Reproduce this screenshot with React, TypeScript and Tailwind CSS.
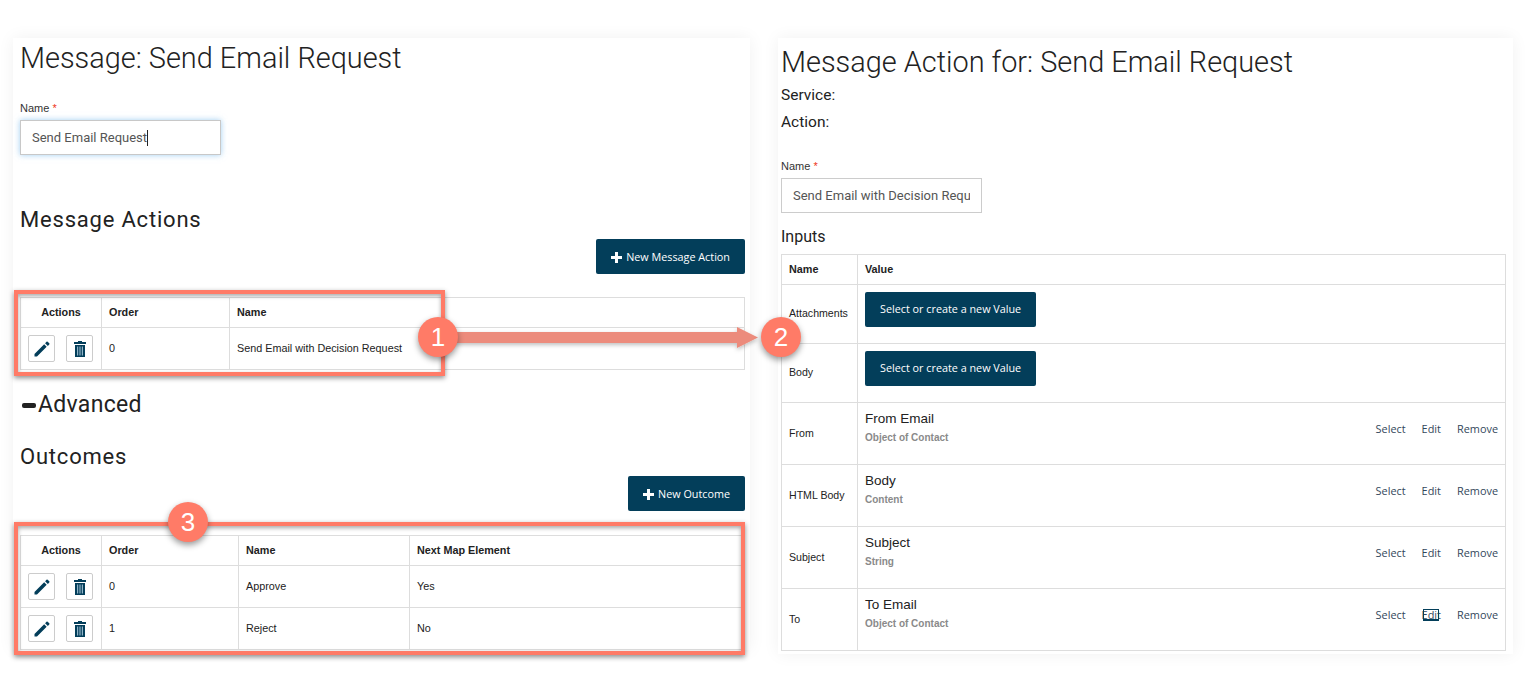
import React from "react";

const Pencil = () => (
  <svg width="20" height="20" viewBox="0 0 24 24" fill="#033e5a">
    <path d="M3 18v3h3L17.6 9.4l-3-3L3 18zM20.71 6.6a1 1 0 0 0 0-1.41l-1.9-1.9a1 1 0 0 0-1.41 0l-1.7 1.7 3.3 3.3 1.71-1.69z" />
  </svg>
);

const Trash = () => (
  <svg width="12" height="16" viewBox="0 0 12 16" fill="#033e5a">
    <path d="M4 0h4v1h4v2H0V1h4V0z" />
    <path d="M1 4h10v12H1V4z" />
    <path d="M3 5.5h1.2v9H3zM5.4 5.5h1.2v9H5.4zM7.8 5.5H9v9H7.8z" fill="#8fb3c7" />
  </svg>
);

const Plus = () => (
  <svg width="11" height="11" viewBox="0 0 11 11" fill="#ffffff">
    <path d="M4 0h3v4h4v3H7v4H4V7H0V4h4z" />
  </svg>
);

const IconButtons = () => (
  <div className="flex gap-[11px]">
    <button className="flex h-[27px] w-[27px] items-center justify-center rounded-[2px] border border-[#cccccc] bg-white">
      <Pencil />
    </button>
    <button className="flex h-[27px] w-[27px] items-center justify-center rounded-[2px] border border-[#cccccc] bg-white">
      <Trash />
    </button>
  </div>
);

const DarkButton = ({ children }: { children: React.ReactNode }) => (
  <button className="flex h-[35px] items-center justify-center gap-[4px] rounded-[2px] bg-[#033e5a] px-[15px] pt-[1px] font-['Open_Sans',sans-serif] text-[10.8px] text-white">
    {children}
  </button>
);

const thBase = "border border-[#dddddd] px-[7px] align-middle text-[10.8px] font-bold text-[#222222]";
const thClass = thBase + " text-left";
const thCenter = thBase + " text-center";
const tdClass = "border border-[#dddddd] px-[7px] align-middle text-[10.8px] text-[#222222]";
const tdName = "border border-[#dddddd] px-[7px] align-middle text-[10.6px] text-[#222222]";

const Heading = ({ children, className }: { children: React.ReactNode; className: string }) => (
  <h2 className={"font-['Roboto',sans-serif] text-[#222222] " + className}>{children}</h2>
);

const NameLabel = ({ className }: { className: string }) => (
  <div className={"h-[14px] font-['Liberation_Sans',sans-serif] text-[11px] leading-[14px] text-[#333333] " + className}>
    Name <span className="text-[#ee3322]">*</span>
  </div>
);

const inputRows = [
  { name: "From", title: "From Email", sub: "Object of Contact" },
  { name: "HTML Body", title: "Body", sub: "Content" },
  { name: "Subject", title: "Subject", sub: "String" },
  { name: "To", title: "To Email", sub: "Object of Contact" },
];

const LeftPanel = () => (
  <section className="h-[612px] w-[737px] bg-white pl-[7px] pr-[5px] shadow-[0_0_16px_rgba(0,0,0,0.06)]">
    <h1 className="h-[40px] font-['Roboto',sans-serif] text-[28.9px] font-light leading-[40px] text-[#222222]">
      Message: Send Email Request
    </h1>
    <NameLabel className="mt-[23px]" />
    <div className="mt-[5px] flex h-[35px] w-[201px] items-center border border-[#c8c8c8] bg-white px-[11px] font-['Roboto',sans-serif] text-[13px] text-[#555555] shadow-[0_0_6px_rgba(102,175,233,0.6)]">
      Send Email Request
      <span className="h-[16px] w-px bg-[#222222]" />
    </div>

    <Heading className="mt-[50px] h-[30px] text-[22px] leading-[30px] tracking-[0.8px]">Message Actions</Heading>
    <div className="mt-[4px] flex justify-end">
      <DarkButton>
        <Plus />
        New Message Action
      </DarkButton>
    </div>

    <table className="mt-[23px] w-[725px] table-fixed border-collapse font-['Liberation_Sans',sans-serif]">
      <thead>
        <tr className="h-[30px]">
          <th className={thCenter + " w-[81px]"}>Actions</th>
          <th className={thClass + " w-[128px]"}>Order</th>
          <th className={thClass}>Name</th>
        </tr>
      </thead>
      <tbody>
        <tr className="h-[42px]">
          <td className={tdClass}>
            <IconButtons />
          </td>
          <td className={tdClass}>0</td>
          <td className={tdClass}>Send Email with Decision Request</td>
        </tr>
      </tbody>
    </table>

    <Heading className="mt-[18px] flex h-[34px] items-center text-[23px] leading-[34px] tracking-[0.3px]">
      <span className="ml-[2px] h-[5px] w-[14px] rounded-[2px] bg-[#222222]" />
      <span className="ml-[2px]">Advanced</span>
    </Heading>
    <Heading className="mt-[20px] h-[30px] text-[22px] leading-[30px] tracking-[0.8px]">Outcomes</Heading>
    <div className="mt-[4px] flex justify-end">
      <DarkButton>
        <Plus />
        New Outcome
      </DarkButton>
    </div>

    <table className="mt-[24px] w-[725px] table-fixed border-collapse font-['Liberation_Sans',sans-serif]">
      <thead>
        <tr className="h-[30px]">
          <th className={thCenter + " w-[81px]"}>Actions</th>
          <th className={thClass + " w-[137px]"}>Order</th>
          <th className={thClass + " w-[171px]"}>Name</th>
          <th className={thClass}>Next Map Element</th>
        </tr>
      </thead>
      <tbody>
        {[
          ["0", "Approve", "Yes"],
          ["1", "Reject", "No"],
        ].map((r) => (
          <tr key={r[0]} className="h-[42px]">
            <td className={tdClass}>
              <IconButtons />
            </td>
            <td className={tdClass}>{r[0]}</td>
            <td className={tdClass}>{r[1]}</td>
            <td className={tdClass}>{r[2]}</td>
          </tr>
        ))}
      </tbody>
    </table>
  </section>
);

const RightPanel = () => (
  <section className="w-[735px] bg-white pb-[3px] pl-[3px] pt-[4px] shadow-[0_0_16px_rgba(0,0,0,0.06)]">
    <h1 className="h-[40px] font-['Roboto',sans-serif] text-[28.9px] font-light leading-[40px] text-[#222222]">
      Message Action for: Send Email Request
    </h1>
    <div className="mt-[3px] h-[20px] font-['Roboto',sans-serif] text-[15.5px] leading-[20px] text-[#222222]">Service:</div>
    <div className="mt-[7px] h-[20px] font-['Roboto',sans-serif] text-[15.5px] leading-[20px] text-[#222222]">Action:</div>
    <NameLabel className="mt-[27px]" />
    <div className="mt-[5px] flex h-[35px] w-[201px] items-center border border-[#cccccc] bg-white px-[11px] font-['Roboto',sans-serif] text-[13px] text-[#555555]">
      <div className="overflow-hidden whitespace-nowrap">Send Email with Decision Request</div>
    </div>
    <Heading className="mt-[12px] h-[24px] text-[16px] font-normal leading-[24px]">Inputs</Heading>

    <table className="mt-[5px] w-[725px] table-fixed border-collapse font-['Liberation_Sans',sans-serif]">
      <thead>
        <tr className="h-[30px]">
          <th className={thClass + " w-[76px]"}>Name</th>
          <th className={thClass}>Value</th>
        </tr>
      </thead>
      <tbody>
        {["Attachments", "Body"].map((n) => (
          <tr key={n} className="h-[59px]">
            <td className={tdName}>{n}</td>
            <td className={tdClass}>
              <div className="-mt-[5px] mb-[5px] flex">
                <DarkButton>Select or create a new Value</DarkButton>
              </div>
            </td>
          </tr>
        ))}
        {inputRows.map((r) => (
          <tr key={r.name} className="h-[62px]">
            <td className={tdName}>{r.name}</td>
            <td className={tdClass}>
              <div className="flex items-start justify-between pb-[14px]">
                <div>
                  <div className="text-[13.5px] leading-[20px] text-[#222222]">{r.title}</div>
                  <div className="mt-[2px] text-[10px] font-bold leading-[14px] text-[#8a8a8a]">{r.sub}</div>
                </div>
                <div className="mt-[13px] flex gap-[16px] font-['Open_Sans',sans-serif] text-[10.9px] leading-[14px] text-[#33475b]">
                  <span>Select</span>
                  {r.name === "To" ? (
                    <span className="relative">
                      Edit
                      <span className="absolute left-[1px] top-[1px] h-[12px] w-[16px] border border-b-2 border-[#033e5a]" />
                    </span>
                  ) : (
                    <span>Edit</span>
                  )}
                  <span>Remove</span>
                </div>
              </div>
            </td>
          </tr>
        ))}
      </tbody>
    </table>
  </section>
);

const Badge = ({ n, className }: { n: string; className: string }) => (
  <div
    className={
      "absolute flex h-[40px] w-[40px] items-center justify-center rounded-full bg-[#ff7b67] font-['Liberation_Sans',sans-serif] text-[26px] text-white shadow-[0_3px_6px_rgba(0,0,0,0.4)] " +
      className
    }
  >
    {n}
  </div>
);

export default function App() {
  return (
    <div className="relative flex h-[699px] items-start gap-[28px] overflow-hidden bg-white pl-[13px] pt-[38px]">
      <LeftPanel />
      <RightPanel />

      <div className="absolute left-[14px] top-[290px] h-[86px] w-[431px] border-[4px] border-[#ff7b67] shadow-[0_2px_5px_rgba(0,0,0,0.45),inset_0_2px_4px_rgba(0,0,0,0.35)]" />
      <div className="absolute left-[14px] top-[522px] h-[133px] w-[731px] border-[4px] border-[#ff7b67] shadow-[0_2px_5px_rgba(0,0,0,0.45),inset_0_2px_4px_rgba(0,0,0,0.35)]" />

      <svg className="absolute left-[450px] top-[320px]" width="315" height="36" viewBox="0 0 315 36">
        <defs>
          <filter id="arrowShadow" x="-5%" y="-50%" width="110%" height="200%">
            <feDropShadow dx="0" dy="2" stdDeviation="2" floodColor="#000000" floodOpacity="0.25" />
          </filter>
        </defs>
        <path d="M0 12H287V7L308 17.5L287 28V23H0Z" fill="#ec8b7b" filter="url(#arrowShadow)" />
      </svg>

      <Badge n="1" className="left-[418px] top-[317px]" />
      <Badge n="2" className="left-[761px] top-[317px]" />
      <Badge n="3" className="left-[168px] top-[502px]" />
    </div>
  );
}
